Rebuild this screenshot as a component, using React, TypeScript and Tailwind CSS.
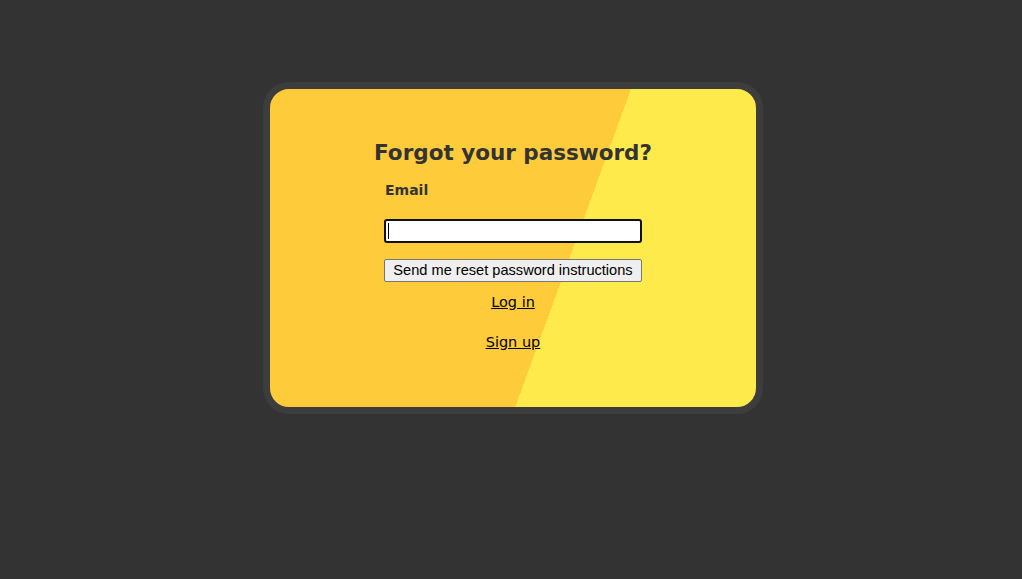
import React from "react";

const sans = "font-['DejaVu_Sans',Verdana,sans-serif]";

export default function App() {
  return (
    <div className="min-h-screen bg-[#333333] pt-[82px] flex justify-center pl-1">
      <div className="w-[500px] h-[332px] rounded-[26px] border-[7px] border-[#3d3d3d] bg-[linear-gradient(110deg,#fecc3b_60%,#ffea4c_60%)]">
        <div className={`flex flex-col items-center pt-[51px] ${sans}`}>
          <h1 className="text-[21.5px] leading-[26px] font-bold text-[#333333]">
            Forgot your password?
          </h1>
          <form className="w-[258px] mt-[15px]" onSubmit={(e) => e.preventDefault()}>
            <label className="block pl-[1px] text-[14px] leading-[18px] font-bold text-[#333333]">
              Email
            </label>
            <div className="mt-[20px] h-[24px] w-full rounded-[3px] border-2 border-[#111111] bg-white flex items-center pl-[2px]">
              <span className="h-[16px] w-px bg-black" />
            </div>
            <button
              type="submit"
              className="mt-[16px] h-[23px] w-full rounded-[2px] border border-[#767676] bg-[#efefef] font-['Liberation_Sans',Arial,sans-serif] text-[14.6px] leading-[21px] text-black"
            >
              Send me reset password instructions
            </button>
          </form>
          <a href="#" className="mt-[10px] text-[14.5px] leading-[20px] text-black underline">
            Log in
          </a>
          <a href="#" className="mt-[20px] text-[14.5px] leading-[20px] text-black underline">
            Sign up
          </a>
        </div>
      </div>
    </div>
  );
}
